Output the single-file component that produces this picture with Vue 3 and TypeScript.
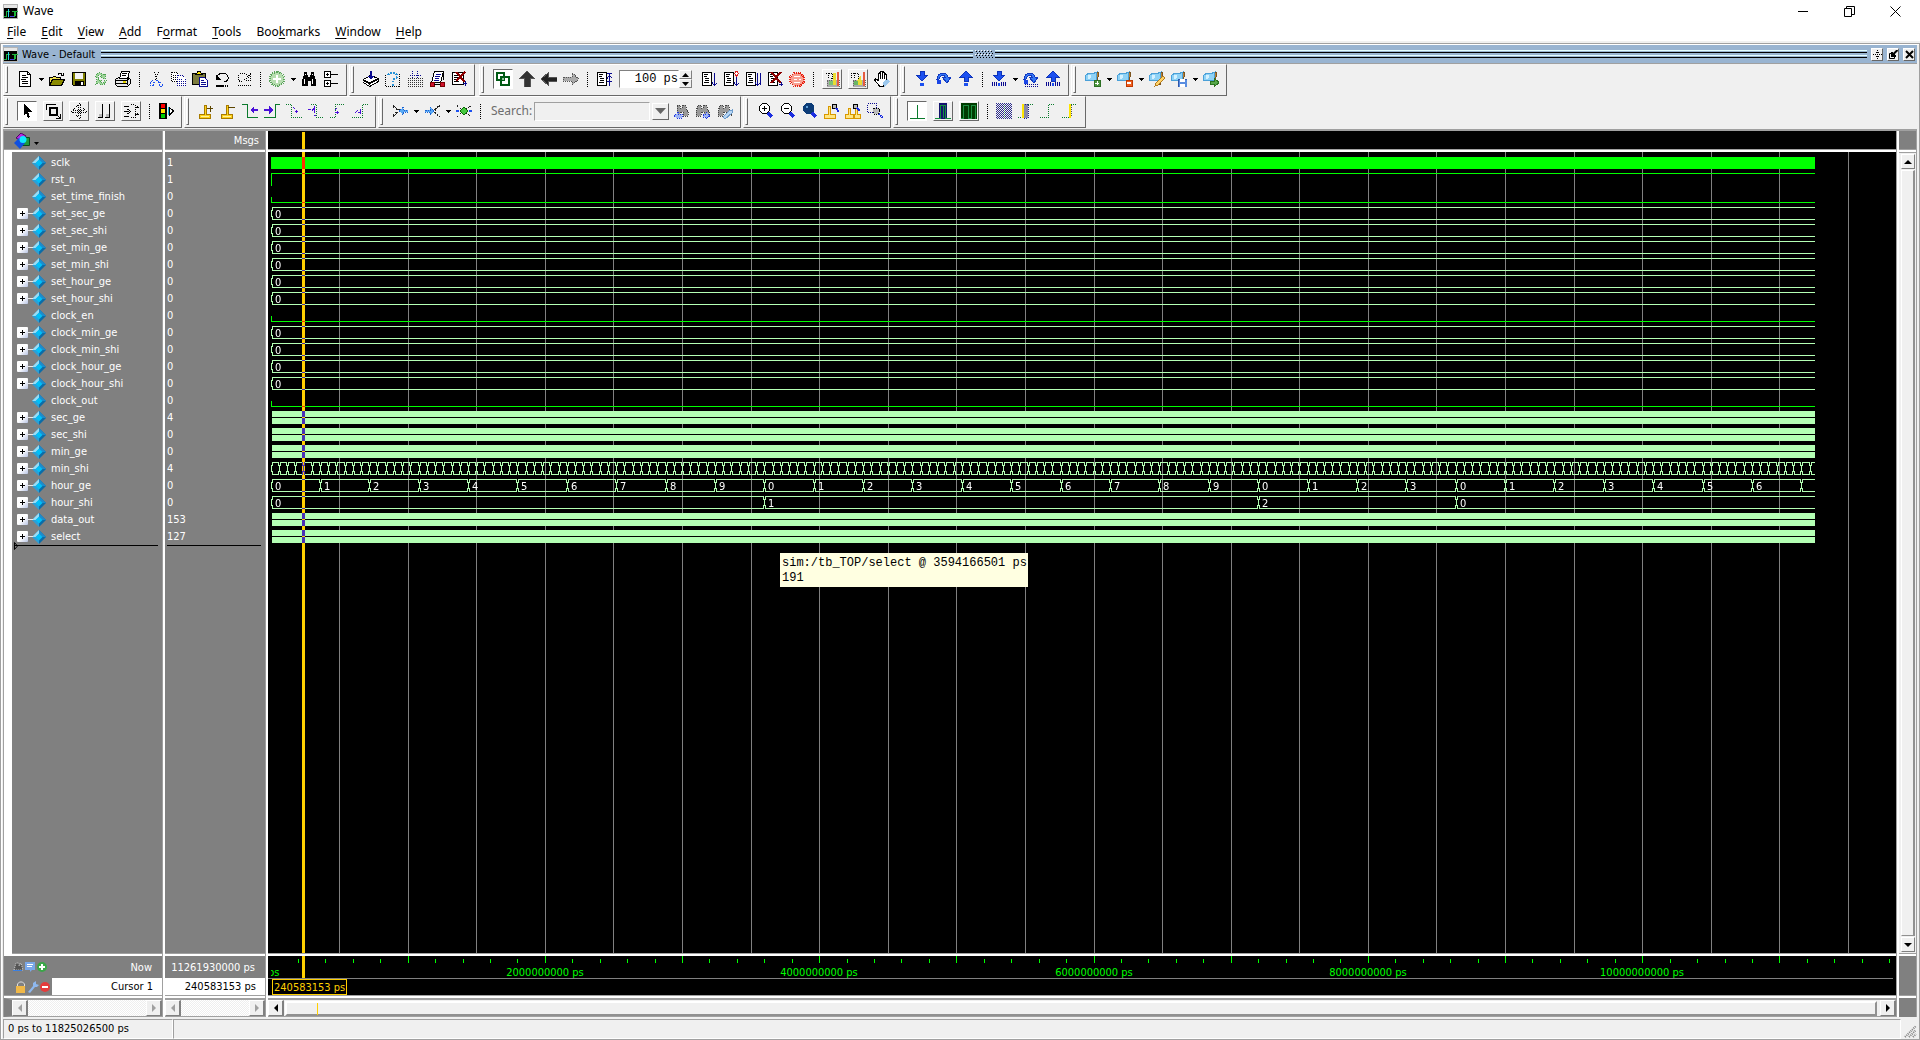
<script setup lang="ts">
import { ref } from 'vue'

/* path data, fill, stroke, dash pattern, stroke width */
type Shape = [string, string?, string?, string?, number?]

interface Tool {
  kind: 'icon' | 'arrow' | 'sep' | 'box' | 'pressed' | 'time' | 'search'
  icon?: string
  label?: string
}

const K = '#000'
const N = 'none'
const NAVY = '#0a0a90'
const BLUE = '#1c50f0'
const GREEN = '#0a7a2c'
const VIOLET = '#4a10d8'

const logo: Shape[] = [
  ['M0 0h15v15H0z', '#b4b4b4'],
  ['M1 1h13v3H1z', '#e6e6e6'],
  ['M1 4h13v10H1z', K],
  ['M1 12.5h2v-5h4M9 7.5h2v5M12.5 12v-5h2', N, '#1eb43c'],
  ['M5.5 5v8', N, '#2ad2e6'],
  ['M7 12.5h4', N, '#4a3ce0'],
]
const doc: Shape[] = [
  ['M1.5 1.5H10.5V14.5H1.5Z', '#fff', K],
  ['M3 3.5h4M3 5.5h3M4 7.5h4M4 9.5h4M3 11.5h5', N, K],
]
const flag: Shape[] = [
  ['M12 1l2 1-3 12-1-1z', '#b88036', '#7d5520'],
  ['M1 4l3-2 3 1 5-2-1 8-4 1-3-1-4 1z', '#8ed2f6', '#4aa0d8'],
  ['M3 4l3 0 0 3-3 1z', '#d4f1ff'],
]
const arrowDown = 'M6 0h4v4h4l-6 6-6-6h4z'
const bars = 'M1.5 11v4M3.5 11v4M5.5 11v4M10.5 11v4M12.5 11v4M14.5 11v4'
const arc: Shape[] = [
  ['M1 8C2 1 10 0 12 6h3l-4 6-5-6h3C8 3 4 4 3 8z', '#3578f4', '#1238c0'],
  ['M1 9h4v4H1z', '#1a45e6'],
]

const icons: Record<string, Shape[]> = {
  new: [
    ['M2.5 .5h8l3 3v12h-11z', '#fff', K],
    ['M10.5 .5v3h3M5 4.5h4M5 6.5h6M4 8.5h5M5 10.5h6M5 12.5h6', N, K],
  ],
  open: [
    ['M.5 14.5v-8h3l1-1h2l1 1h4v2', '#f2e250', K],
    ['M.5 14.5l3-6h12l-3 6z', '#8a8a00', K],
    ['M9 3.5c1-2 3-2 4 0M14.5 2v3M11.5 4.5h3', N, K],
  ],
  save: [
    ['M1.5 1.5h13v13h-12l-1-1z', '#808000', K],
    ['M4 2h8v6H4z', '#f4f4f4'],
    ['M4 10h9v5H4z', K],
    ['M10 11h2v3h-2z', '#fff'],
  ],
  reload: [
    ['M2 6C4 1 9 1 11 4l2-1-1 5-5-2 2-1C7 3 5 4 5 7z', '#9ed49a', '#4fa352', '1 1'],
    ['M14 9c-2 6-7 6-9 3l-2 1 1-5 5 2-2 1c2 2 4 1 4-1z', '#9ed49a', '#4fa352', '1 1'],
  ],
  print: [
    ['M.5 8.5l3-2h10l2 2v4l-3 3h-10l-2-2z', '#e8e8e8', K],
    ['M4.5 7.5l2-7h8l-2 7z', '#fff', K],
    ['M7 2.500h5M7 4.500h4', N, K],
    ['M1 9.500h11v4M12 9l3-2M1 12.500h11', N, K],
    ['M8 10h3v2H8z', '#e2d000'],
  ],
  cut: [
    ['M6.5 1l2 7M10.5 1l-3 8', N, K, '1 1'],
    ['M5 9.5l-3 2v3h3l1-3 3-2 2 2v4h3v-3l-3-2-2-1', N, BLUE, '2 1'],
  ],
  copy: [
    ['M1.5 1.5h5l2 2v7h-7zM3 4.5h4M3 6.5h4M3 8.5h4', '#fff', K, '1 1'],
    ['M7.5 4.5h5l3 3v7h-8zM9 8.5h4M9 10.5h5M9 12.5h5', '#fff', NAVY, '1 1'],
  ],
  paste: [
    ['M.5 2.5h13v11H.5z', '#7b7b3d', K],
    ['M4 3.5l2-3h2l2 3z', '#ffe600', K],
    ['M7.5 6.5h5l3 3v6h-8z', '#fff', NAVY],
    ['M9 9.5h3M9 11.5h5M9 13.5h5', N, NAVY],
  ],
  undo: [
    ['M3 6.5C4 1 13 1 14 6c1 3-2 5-4 5', N, K],
    ['M1.5 3v6h6z', K],
    ['M2 14h8v2H2zM11 14h1v2h-1zM13 14h1v2h-1z', K],
  ],
  redo: [
    ['M13 6.5C12 1 3 1 2 6c0 3 2 5 4 5', N, K, '1 1'],
    ['M14.5 3v6h-6z', N, K, '1 1'],
    ['M2 14.5h13', N, K, '1 1'],
  ],
  plus: [
    ['M8 1a7 7 0 1 0 .1 0z', '#b7ddb0', '#5ca45c', '1 1', 2],
    ['M7 4h2v3h3v2H9v3H7V9H4V7h3z', '#fff'],
  ],
  find: [
    ['M3 1h3v3h1v2h2V4h1V1h3v3l2 5v6h-5v-5H7v5H1V9l2-5z', K],
    ['M3 8h1v5H3zM11 8h1v5h-1zM4 3h1v1H4zM11 3h1v1h-1z', '#fff'],
  ],
  expand: [
    ['M1.5 .5h6v6h-6zM1.5 9.5h6v6h-6zM8 3.5h7M8 12.5h7M3 3.5h3M4.5 2v3M3 12.5h3M4.5 11v3', '#fff', K],
  ],
  compile: [
    ['M.5 11.5l6 4 9-5v-2l-6-2zM.5 9l6 4 9-5', '#fff', K],
    ['M.5 8.5l7-4 8 3-9 4.5z', '#fff', K],
    ['M7 0h2v5h2l-3 4-3-4h2z', NAVY],
  ],
  help: [
    ['M.5 3.5v12h14v-13', N, K, '1 1'],
    ['M3 4c2-4 9-3 9 1 0 3-4 2-4 6', N, '#2692d8', '2 1', 2],
    ['M7 13h2v2H7z', '#2692d8'],
  ],
  grid: [
    ['M.5 7.5h15M.5 9.5h15M.5 11.5h15M.5 13.5h15M.5 15.5h15', N, '#333', '1 1'],
    ['M5.5 0v7M10.5 0v7M3 4.5h5M8.5 4.5h5', N, NAVY, '1 1'],
  ],
  car: [
    ['M5.5 .5h9l-3 11h-9z', '#fff', K],
    ['M7 3.5h5M6 5.5h5M6 7.5h4M5 9.5h5', N, NAVY],
    ['M1 11h4v4H1zM11 11h4v4h-4z', '#d0102c', '#700'],
    ['M5 13.5h6M14.5 1v8', N, K],
  ],
  stopdoc: [
    ['M1.5 1.5h11v12h-11z', '#fff', K],
    ['M3 4.5h5M3 6.5h4M3 8.5h5M3 10.5h5', N, K],
    ['M5 1l9 10M14 1L5 10', N, '#8b0000', '', 2],
    ['M14.5 10v5M12 12.5h4', N, NAVY],
  ],
  squares: [
    ['M2 2h7v7H2zM6 6h8v8H6z', N, '#005a14', '', 2],
    ['M7 7h2v2H7z', '#8fc59a'],
  ],
  up: [['M8 0l7 7h-4v9H5V7H1z', '#333', '#555']],
  left: [['M0 8l7-6v4h9v4H7v4z', '#222', '#555']],
  right: [['M16 8L9 2v4H0v4h9v4z', '#aaa', '#555', '1 1']],
  docup: [...doc, ['M11 2.5h5M13.5 3v12M11 7.5l2.5-3 3 3M11 10.5h5', N, NAVY]],
  docdown: [...doc, ['M13.5 2v12M11 11.5l2.5 3 3-3', N, NAVY]],
  docstep: [
    ...doc,
    ['M13.5 5v9M11 11.5l2.5 3 3-3', N, NAVY],
    ['M13.5 0l2 2.5-2 2.5-2-2.5z', '#fff', '#e02020'],
  ],
  docrun: [...doc, ['M12.5 2v12M15.5 2v12M10 11.5l2.5 3 3-3 2 3', N, NAVY]],
  docx: [
    ...doc,
    ['M4 1l10 11M14 1L4 12', N, '#8b0000', '', 2],
    ['M14.5 11v4M12 13.5h4', N, NAVY],
  ],
  stop: [
    ['M5 2h6l4 4v5l-4 4H5l-4-4V6z', '#f8a092', '#e82010', '1 1', 2],
    ['M5 5.5h6M5 8.5h3M10 8.5h2M5 11.5h6', N, '#fff'],
  ],
  mem1: [
    ['M1.5 2.5h3v5M4.5 2.5h4v5h-3', N, K, '1 1'],
    ['M3 9h12v7H3z', '#aaa', '#666', '1 1'],
    ['M9 2h3v12H9z', '#e9dc32'],
    ['M13 1h2v14h-2z', '#e65b40'],
    ['M5 10h4v4H5z', '#7cc075'],
  ],
  mem2: [
    ['M1.5 7v-5h3v5M4.5 2.5h4v5', N, K, '1 1'],
    ['M3 9h12v7H3z', '#aaa', '#666', '1 1'],
    ['M7 10l4-6 1 10H7z', '#e9dc32'],
    ['M13 1h2v14h-2z', '#e65b40'],
    ['M4 10h4v4H4z', '#6ab565'],
  ],
  hand: [
    ['M4.5 9.5V3l1-1 1 1V1l1-1 1 1v2l1-2 1 1v3l1-2 1 1v7l-3 4h-4l-5-6 1-1z', '#fff', K],
    ['M9 11l5-3 2 3-6 5z', '#9cc8ee'],
    ['M6.5 3v5M8.5 3v5M10.5 4v4', N, K],
  ],
  stepin: [[arrowDown, BLUE, '#0e34ba'], ['M6 12h4v3H6z', BLUE]],
  stepover: arc,
  stepout: [['M8 0l6 6h-4v4H6V6H2z', BLUE, '#0e34ba'], ['M6 12h4v3H6z', BLUE]],
  stepin2: [[arrowDown, BLUE, '#0e34ba'], ['M7 12h2v3H7z', BLUE], [bars, N, NAVY]],
  stepover2: [...arc, ['M1.5 15.5h14M2 13.5h13', N, NAVY, '1 1']],
  stepout2: [['M8 0l6 6h-4v4H6V6H2z', BLUE, '#0e34ba'], ['M7 12h2v3H7z', BLUE], [bars, N, NAVY]],
  flagadd: [...flag, ['M9 9h6v6H9z', '#4f9840', '#2d7024'], ['M10 12h4M12 10v4', N, '#fff']],
  flagdel: [...flag, ['M9 9h6v6H9z', '#f06020', '#c03800'], ['M10 12h4', N, '#fff', '', 2]],
  flagedit: [...flag, ['M6 15l1-3 7-7 2 2-7 7z', '#ffd36a', '#b47b1c']],
  flagsave: [
    ...flag,
    ['M7 8h9v8H7z', '#5a8de0', '#2e56a8'],
    ['M9 8h5v3H9zM9 13h5v3H9z', '#fff'],
  ],
  flaggo: [...flag, ['M7 10h4V7l5 4.5-5 4.5v-3H7z', '#57a84a', '#2c7421']],
  pointer: [['M5 1l8 8H9l2 5-2 1-2-5-2 3z', K]],
  zoombox: [
    ['M1.5 7V1.5h9', N, K],
    ['M5 5h7v7H5z', N, K, '', 2],
    ['M11 11l4 4M15.5 11v5M11 15.5h5', N, K],
  ],
  move: [
    ['M7.5 2v12M9.5 2v12M2 7.5h12M2 9.5h12', N, K, '1 1'],
    ['M5 4l3.5-3.5L12 4M5 12l3.5 3.5L12 12M4 5L.5 8.5 4 12M12 5l3.5 3.5L12 12', N, K, '1 1'],
  ],
  twobars: [['M5.5 1v13M12.5 1v13M1 14.5h5M8 14.5h5', N, K], ['M2 11h3v3H2zM9 11h3v3H9z', '#bbb']],
  edit: [
    ['M1 3.5h5M1 8.5h5M1 13.5h5M4.5 6l3 2.5-3 2.5', N, K],
    ['M8 1.5h4v13h-4', N, K, '1 1'],
    ['M12 4.5h4M12 11.5h4M14.5 3v3M14.5 10v3', N, K, '2 1'],
  ],
  traffic: [
    ['M1 0h8v16H1z', K],
    ['M3 1h4v4H3z', '#f00'],
    ['M3 6h4v4H3z', '#ffe100'],
    ['M3 11h4v4H3z', '#0c0'],
    ['M11.5 4.5l4 3.5-4 4z', '#fff', K],
    ['M10.5 4v8', N, '#19b4d8'],
  ],
  curadd: [
    ['M6 2h2v9h4v4H1v-4h5z', '#ffd21a', '#a87b00'],
    ['M3 13h8', N, '#fff3a0'],
    ['M9 5.5h6M12.5 3v6', N, '#5c4500'],
  ],
  curdel: [
    ['M6 2h2v9h4v4H1v-4h5z', '#ffd21a', '#a87b00'],
    ['M3 13h8', N, '#fff3a0'],
    ['M8 4.5h7', N, '#5c4500'],
  ],
  prevedge: [['M0 1.5h5.5V14.5H16', N, GREEN], ['M8 7l4-4v3h4v2h-4v3z', VIOLET]],
  nextedge: [['M0 14.5h11.5V1.5H16', N, GREEN], ['M9 7L5 3v3H0v2h5v3z', VIOLET]],
  edge1: [['M0 1.5h5.5V14.5H16', N, GREEN, '1 1'], ['M7 4l2 2M9 8h3M10 7l1 3', N, VIOLET]],
  edge2: [['M3 1.5h5.5V14.5H16', N, GREEN, '1 1'], ['M0 6.5h3M4 8l2-3v5M6 12h2', N, VIOLET]],
  edge3: [['M0 14.5h5.5V1.5H14', N, GREEN, '1 1'], ['M5 7l2-2M5 9h4M7 8v3', N, VIOLET]],
  edge4: [['M0 14.5h10.5V1.5H16', N, GREEN, '1 1'], ['M3 10l3-3M6 9h3M8 6v5', N, VIOLET]],
  merge1: [
    ['M1 2.5l5 4h3M1 13.5l5-4M1 4l4 3M1 12l4-3', N, '#222', '2 1'],
    ['M7 8l4-4v3h5v2h-5v3z', '#58a8f4', '#1d62d0', '1 1'],
  ],
  merge2: [
    ['M16 2.5l-5 4v3l5 4M14 3l-4 4M14 13l-4-4', N, '#222', '2 1'],
    ['M10 8L6 4v3H1v2h5v3z', '#58a8f4', '#1d62d0', '1 1'],
  ],
  merge3: [
    ['M1 2.5l4 3h6l4-3M1 13.5l4-3h6l4 3', N, '#222', '1 1'],
    ['M8 4l4 4-4 4-4-4z', '#46c840', '#086b00'],
    ['M0 8h3M13 8h3', N, BLUE, '', 2],
  ],
  findprev: [
    ['M4 2h3v3h2V2h3l3 7v4h-5V9H7v4H4z', '#999', '#444', '1 1'],
    ['M1 13l4-4v2h4v4H5l-1 1z', '#9db4f4', '#2034e0', '1 1'],
  ],
  findnext: [
    ['M3 2h3v3h2V2h3l3 7v3H9V9H6v4H1V9z', '#999', '#444', '1 1'],
    ['M15 13l-4-4v2H8v3h3v2z', '#9db4f4', '#2034e0', '1 1'],
  ],
  findopt: [
    ['M3 2h3v3h2V2h3l3 7v3H9V9H6v4H1V9z', '#999', '#444', '1 1'],
    ['M6 14l6-6 3-1v3l-7 6z', '#b8d6f4', '#6c9ccc'],
  ],
  zoomin: [
    ['M5.5 .5h4l3 3v4l-3 3h-4l-3-3v-4z', '#fff', K],
    ['M5 5.5h5M7.5 3v5', N, K],
    ['M11 10l4 4', N, '#1c2ee0', '', 3],
  ],
  zoomout: [
    ['M5.5 .5h4l3 3v4l-3 3h-4l-3-3v-4z', '#fff', K],
    ['M5 5.5h5', N, K],
    ['M11 10l4 4', N, '#1c2ee0', '', 3],
  ],
  zoomfull: [
    ['M5 0h5l3 3v5l-3 3H5L2 8V3z', '#0c3c78'],
    ['M5 3h2v2H5z', '#5fa0d8'],
    ['M11 10l4 4', N, '#1c2ee0', '', 3],
  ],
  zoomcur: [
    ['M5 3h2v8h5v4H1v-4h4z', '#ffe680', '#d89800'],
    ['M9 1h4v4H9z', '#bbb', K],
    ['M13 5l3 4', N, '#1c2ee0', '', 2],
  ],
  zoomcur2: [
    ['M3 5h2v6h3v4H0v-4h3zM10 5h2v6h3v4H9v-4h1z', '#ffe680', '#d89800'],
    ['M8 1h4v4H8z', '#bbb', K],
    ['M12 5l3 3', N, '#1c2ee0', '', 2],
  ],
  zoomsel: [
    ['M.5 .5h9v9h-9z', N, NAVY, '1 1'],
    ['M7 5h4l2 3-2 3H7L6 8z', '#bbb', K, '1 1'],
    ['M12 11l4 4', N, '#1c2ee0', '1 1', 2],
  ],
  w1: [['M1 15.5h15M8.5 2v13', N, GREEN]],
  w2: [['M4 0h8v16H4z', '#14146e'], ['M0 15.5h5.5V2.5h5v13H16M8.5 3v12', N, '#149040']],
  w3: [['M0 0h16v16H0z', '#003c00'], ['M0 15.5h2.5V2.5h5v13h3v-13h4v13', N, '#1c9040']],
  w4: [
    ['M0 .5h16M1 1.5h15M0 2.5h16M1 3.5h15M0 4.5h16M1 5.5h15M0 6.5h16M1 7.5h15M0 8.5h16M1 9.5h15M0 10.5h16M1 11.5h15M0 12.5h16M1 13.5h15M0 14.5h16M1 15.5h15', N, '#2a2a8a', '1 1'],
    ['M8.5 2v13', N, '#3a9060', '1 1'],
  ],
  w5: [
    ['M5 1h5v14H5z', '#8888a8', '#222288', '1 1'],
    ['M5 1v14', N, '#ffe600', '', 2],
    ['M0 14.5h4M10 1.5h5', N, GREEN, '1 1'],
  ],
  w6: [['M0 14.5h8.5V1.5H15', N, GREEN, '1 1']],
  w7: [
    ['M0 14.5h7M9 1.5h6', N, GREEN, '1 1'],
    ['M8 1v14', N, '#ffe600', '', 2],
    ['M9.5 2v12', N, '#555', '1 1'],
  ],
}

const t = (icon: string, label: string): Tool => ({ kind: 'icon', icon, label })
const box = (icon: string, label: string): Tool => ({ kind: 'box', icon, label })
const pressed = (icon: string, label: string): Tool => ({ kind: 'pressed', icon, label })
const drop: Tool = { kind: 'arrow', label: 'More' }
const sep: Tool = { kind: 'sep' }

const rows: Tool[][][] = [
  [
    [
      t('new', 'New'), drop, t('open', 'Open'), t('save', 'Save'), t('reload', 'Reload'), t('print', 'Print'), sep,
      t('cut', 'Cut'), t('copy', 'Copy'), t('paste', 'Paste'), t('undo', 'Undo'), t('redo', 'Redo'), sep,
      t('plus', 'Add'), drop, t('find', 'Find'), t('expand', 'Collapse all'),
    ],
    [t('compile', 'Compile'), t('help', 'Compile out of date'), t('grid', 'Compile all'), t('car', 'Simulate'), t('stopdoc', 'Break')],
    [
      pressed('squares', 'Environment'), t('up', 'Up'), t('left', 'Back'), t('right', 'Forward'), sep,
      t('docup', 'Restart'), { kind: 'time' }, t('docdown', 'Run'), t('docstep', 'Continue run'),
      t('docrun', 'Run all'), t('docx', 'Break'), t('stop', 'Stop'), sep,
      box('mem1', 'Performance profiling'), box('mem2', 'Memory profiling'), t('hand', 'Edit breakpoints'),
    ],
    [
      t('stepin', 'Step into'), t('stepover', 'Step over'), t('stepout', 'Step out'), sep,
      t('stepin2', 'Step into current'), drop, t('stepover2', 'Step over current'), t('stepout2', 'Step out current'),
    ],
    [
      t('flagadd', 'Add bookmark'), drop, t('flagdel', 'Delete bookmark'), drop, t('flagedit', 'Manage bookmarks'),
      t('flagsave', 'Save bookmarks'), drop, t('flaggo', 'Jump to bookmark'),
    ],
  ],
  [
    [
      pressed('pointer', 'Select mode'), box('zoombox', 'Zoom mode'), box('move', 'Pan mode'),
      box('twobars', 'Two cursor mode'), box('edit', 'Edit mode'), sep, t('traffic', 'Stop drawing'),
    ],
    [
      t('curadd', 'Insert cursor'), t('curdel', 'Delete cursor'), t('prevedge', 'Previous transition'),
      t('nextedge', 'Next transition'), t('edge1', 'Previous falling edge'), t('edge2', 'Next falling edge'),
      t('edge3', 'Previous rising edge'), t('edge4', 'Next rising edge'),
    ],
    [
      t('merge1', 'Expand time at cursor'), drop, t('merge2', 'Collapse time at cursor'), drop, t('merge3', 'Expanded time mode'),
      sep, { kind: 'search' }, t('findprev', 'Find previous'), t('findnext', 'Find next'), t('findopt', 'Search options'),
    ],
    [
      t('zoomin', 'Zoom in'), t('zoomout', 'Zoom out'), t('zoomfull', 'Zoom full'), t('zoomcur', 'Zoom on cursor'),
      t('zoomcur2', 'Zoom between cursors'), t('zoomsel', 'Zoom other window'),
    ],
    [
      pressed('w1', 'Thin bars'), box('w2', 'Medium bars'), box('w3', 'Full bars'), sep,
      t('w4', 'Contour'), t('w5', 'Left edge'), t('w6', 'Edge'), t('w7', 'Right edge'),
    ],
  ],
]

const menus: [string, string, string][] = [
  ['', 'F', 'ile'], ['', 'E', 'dit'], ['', 'V', 'iew'], ['', 'A', 'dd'], ['F', 'o', 'rmat'],
  ['', 'T', 'ools'], ['Boo', 'k', 'marks'], ['', 'W', 'indow'], ['', 'H', 'elp'],
]

type Kind = 'clock' | 'high' | 'low' | 'bus' | 'dense'
interface Signal {
  name: string
  value: string
  kind: Kind
  /* [start time in units of 1e9 ps, label] */
  spans?: [number, string][]
}

const END = 11.26193
const flat: [number, string][] = [[0, '0']]
const minutes: [number, string][] = []
for (let k = 0; k * 0.06 < END; k++) minutes.push([k * 0.06, ''])
const hours: [number, string][] = []
for (let h = 0; h < 32; h++) hours.push([h * 0.36, h === 31 ? '' : String((h % 24) % 10)])

const signals: Signal[] = [
  { name: 'sclk', value: '1', kind: 'clock' },
  { name: 'rst_n', value: '1', kind: 'high' },
  { name: 'set_time_finish', value: '0', kind: 'low' },
  { name: 'set_sec_ge', value: '0', kind: 'bus', spans: flat },
  { name: 'set_sec_shi', value: '0', kind: 'bus', spans: flat },
  { name: 'set_min_ge', value: '0', kind: 'bus', spans: flat },
  { name: 'set_min_shi', value: '0', kind: 'bus', spans: flat },
  { name: 'set_hour_ge', value: '0', kind: 'bus', spans: flat },
  { name: 'set_hour_shi', value: '0', kind: 'bus', spans: flat },
  { name: 'clock_en', value: '0', kind: 'low' },
  { name: 'clock_min_ge', value: '0', kind: 'bus', spans: flat },
  { name: 'clock_min_shi', value: '0', kind: 'bus', spans: flat },
  { name: 'clock_hour_ge', value: '0', kind: 'bus', spans: flat },
  { name: 'clock_hour_shi', value: '0', kind: 'bus', spans: flat },
  { name: 'clock_out', value: '0', kind: 'low' },
  { name: 'sec_ge', value: '4', kind: 'dense' },
  { name: 'sec_shi', value: '0', kind: 'dense' },
  { name: 'min_ge', value: '0', kind: 'dense' },
  { name: 'min_shi', value: '4', kind: 'bus', spans: minutes },
  { name: 'hour_ge', value: '0', kind: 'bus', spans: hours },
  { name: 'hour_shi', value: '0', kind: 'bus', spans: [[0, '0'], [3.6, '1'], [7.2, '2'], [8.64, '0']] },
  { name: 'data_out', value: '153', kind: 'dense' },
  { name: 'select', value: '127', kind: 'dense' },
]

const LEFT = 3
const SCALE = 137.17
const px = (time: number): number => LEFT + Math.floor(time * SCALE)
const right = px(END)
const rowTop = (i: number): number => 3 + i * 17 + 1

const lowHigh = (s: Signal, i: number): string => {
  const y = rowTop(i) + 0.5
  return s.kind === 'high'
    ? `M${LEFT + 0.5} ${y + 12}V${y}H${right}`
    : `M${LEFT + 0.5} ${y + 6}V${y + 12}H${right}`
}

const busPath = (s: Signal, i: number): string => {
  const y = rowTop(i)
  const spans = s.spans ?? []
  return spans
    .map(([start], k) => {
      const a = px(start) + 0.5
      const last = k === spans.length - 1
      const b = last ? right : px(spans[k + 1][0]) + 0.5
      const open = `M${a + 1} ${y}v4M${a} ${y + 3}v7M${a + 1} ${y + 9}v4`
      const close = last ? '' : `M${b - 1} ${y}v4M${b - 1} ${y + 9}v4`
      const e = last ? b : b - 1
      return `${open}${close}M${a + 1} ${y + 0.5}H${e}M${a + 1} ${y + 12.5}H${e}`
    })
    .join('')
}

const gridLines = Array.from({ length: 23 }, (_, k) => px((k + 1) * 0.5) + 0.5)
const ticks = Array.from({ length: 59 }, (_, k) => ({ x: px((k + 1) * 0.2) + 0.5, top: (k + 1) % 5 ? 3 : 0 }))
const timeLabels = [2, 4, 6, 8, 10].map((n) => ({ x: px(n), text: `${n}000000000 ps` }))
const cursorX = px(0.240583153) - 2

const runLength = ref('100 ps')
const query = ref('')
</script>

<template>
  <div class="app">
    <header class="titlebar">
      <svg width="15" height="15" shape-rendering="crispEdges">
        <path v-for="(p, n) in logo" :key="n" :d="p[0]" :fill="p[1]" :stroke="p[2] || 'none'" />
      </svg>
      <span class="title">Wave</span>
      <div class="winbtns">
        <button aria-label="Minimize"><svg width="11" height="11"><path d="M0 5.5h10" stroke="#000" /></svg></button>
        <button aria-label="Restore">
          <svg width="11" height="11"><path d="M.5 2.5h7v8h-7zM2.5 2V.5h8v8H8" fill="none" stroke="#000" /></svg>
        </button>
        <button aria-label="Close"><svg width="11" height="11"><path d="M.5 .5l10 10M10.5 .5l-10 10" stroke="#000" /></svg></button>
      </div>
    </header>

    <nav class="menubar">
      <button v-for="m in menus" :key="m.join('')">{{ m[0] }}<u>{{ m[1] }}</u>{{ m[2] }}</button>
    </nav>

    <section class="frame">
      <div class="panetitle">
        <svg width="15" height="15" shape-rendering="crispEdges">
          <path v-for="(p, n) in logo" :key="n" :d="p[0]" :fill="p[1]" :stroke="p[2] || 'none'" />
        </svg>
        <span class="panename">Wave - Default</span>
        <div class="stripes"><i /><i /></div>
        <svg class="grip" width="18" height="8" shape-rendering="crispEdges">
          <path d="M0 .5h18M0 4.5h18" stroke="#fff" stroke-dasharray="1 2" />
          <path d="M1 1.5h17M1 5.5h17M2 3.5h16M2 7.5h16" stroke="#000" stroke-dasharray="1 2" />
        </svg>
        <div class="stripes"><i /><i /></div>
        <div class="panebtns">
          <button aria-label="Undock">
            <svg width="9" height="9"><path d="M4.500 0v9M0 4.500h9M3 2.500h3M3 6.500h3" stroke="#000" stroke-dasharray="1 1" /></svg>
          </button>
          <button aria-label="Dock">
            <svg width="9" height="9"><path d="M.5 3.5h5v5h-5z" fill="none" stroke="#000" /><path d="M8.5 0L3 5.5M3 2v4h4" fill="none" stroke="#000" stroke-width="2" /></svg>
          </button>
          <button aria-label="Close pane">
            <svg width="9" height="9"><path d="M1 1l7 7M8 1L1 8" stroke="#000" stroke-width="2" /></svg>
          </button>
        </div>
      </div>

      <div v-for="(row, r) in rows" :key="r" class="toolrow">
        <div v-for="(bar, b) in row" :key="b" class="toolbar" :class="{ run: bar.some((x) => x.kind === 'time') }">
          <i class="handle" />
          <template v-for="(tool, k) in bar" :key="k">
            <i v-if="tool.kind === 'sep'" class="sep" />
            <button v-else-if="tool.kind === 'arrow'" class="arrow" :aria-label="tool.label">
              <svg width="5" height="3" shape-rendering="crispEdges"><path d="M0 0h5L2.5 3z" /></svg>
            </button>
            <div v-else-if="tool.kind === 'time'" class="time">
              <input v-model="runLength" aria-label="Run length" />
              <div class="spin">
                <button aria-label="Increase"><svg width="7" height="4"><path d="M0 4h7L3.5 0z" /></svg></button>
                <button aria-label="Decrease"><svg width="7" height="4"><path d="M0 0h7L3.5 4z" /></svg></button>
              </div>
            </div>
            <div v-else-if="tool.kind === 'search'" class="search">
              <label for="query">Search:</label>
              <input id="query" v-model="query" />
              <button aria-label="Search history"><svg width="11" height="6"><path d="M0 0h11L5.5 6z" fill="#666" /></svg></button>
            </div>
            <button v-else class="tool" :class="tool.kind" :aria-label="tool.label">
              <svg width="16" height="16" viewBox="0 0 16 16" shape-rendering="crispEdges">
                <path
                  v-for="(p, n) in icons[tool.icon ?? '']"
                  :key="n"
                  :d="p[0]"
                  :fill="p[1] || 'none'"
                  :stroke="p[2] || 'none'"
                  :stroke-dasharray="p[3] || 'none'"
                  :stroke-width="p[4] || 1"
                />
              </svg>
            </button>
          </template>
        </div>
      </div>

      <main class="panes">
        <div class="pane names">
          <div class="head">
            <svg width="26" height="16">
              <path d="M2 5l5-5 5 3-3 6z" fill="#b428e0" stroke="#4a0a60" />
              <path d="M8 4.5h7.5v8H8z" fill="#1e9a3c" stroke="#0a4a1c" />
              <path d="M0 10l5-5 6 5-5 6z" fill="#1050e0" />
              <circle cx="9" cy="6.5" r="3.5" fill="#10e8ff" />
              <path d="M20 9h5l-2.5 3z" fill="#000" />
            </svg>
          </div>
          <div class="body">
            <ul class="list">
              <li v-for="s in signals" :key="s.name">
                <span class="knob">
                  <button v-if="s.spans || s.kind === 'dense'" class="plus" aria-label="Expand" />
                </span>
                <svg width="14" height="14" viewBox="0 0 14 14">
                  <path d="M7 0L0 7l7 7z" fill="#2aa0d8" />
                  <path d="M7 0l7 7-7 7z" fill="#0b6da8" />
                  <path d="M7 0L0 7h4l3-3z" fill="#9adcf4" />
                  <path d="M7 0l7 7h-4L7 4z" fill="#1c8ccc" />
                  <path d="M7 3.5L10.5 7 7 10.5 3.5 7z" fill="#00c0f8" />
                </svg>
                <span>{{ s.name }}</span>
              </li>
            </ul>
            <div class="endline"><svg width="4" height="8"><path d="M.5 .5v7l3-3.5z" fill="none" stroke="#000" /></svg></div>
          </div>
          <div class="foot">
            <div class="now">
              <svg width="36" height="12">
                <path d="M1 9l2-7h3v3l2-3 2 7z" fill="#555" stroke="#ccc" stroke-dasharray="1 1" />
                <path d="M0 9.5h9" stroke="#3c80e0" />
                <path d="M12 1h10v8h-3l-2 2v-2h-5z" fill="#7aa8ea" />
                <path d="M14 3.5h6M14 5.5h5" stroke="#fff" />
                <circle cx="29" cy="6" r="5" fill="#3aa648" />
                <path d="M26 6h6M29 3v6" stroke="#fff" stroke-width="2" />
              </svg>
              <span>Now</span>
            </div>
            <div class="cur">
              <svg width="36" height="12">
                <path d="M2.5 6V3l2-2h3l2 2v3" fill="none" stroke="#ddd" />
                <path d="M1 5h9v7H1z" fill="#f0b848" />
                <path d="M13 11l5-6V2l3-2v3l3 1-2 2h-2l-5 6z" fill="#8eb8ee" />
                <circle cx="30" cy="6" r="5" fill="#e43c3c" />
                <path d="M27 6h6" stroke="#fff" stroke-width="2" />
              </svg>
              <span>Cursor 1</span>
            </div>
          </div>
          <div class="scroll off">
            <button aria-label="Scroll left"><svg width="4" height="8"><path d="M4 0v8L0 4z" /></svg></button>
            <i />
            <button aria-label="Scroll right"><svg width="4" height="8"><path d="M0 0v8l4-4z" /></svg></button>
          </div>
        </div>

        <div class="pane values">
          <div class="head"><span>Msgs</span></div>
          <div class="body">
            <ul class="list">
              <li v-for="s in signals" :key="s.name">{{ s.value }}</li>
            </ul>
            <div class="endline" />
          </div>
          <div class="foot">
            <div class="now"><span>11261930000 ps</span></div>
            <div class="cur"><span>240583153 ps</span></div>
          </div>
          <div class="scroll off">
            <button aria-label="Scroll left"><svg width="4" height="8"><path d="M4 0v8L0 4z" /></svg></button>
            <i />
            <button aria-label="Scroll right"><svg width="4" height="8"><path d="M0 0v8l4-4z" /></svg></button>
          </div>
        </div>

        <div class="pane waves">
          <div class="head">
            <svg class="fill"><rect :x="cursorX" y="1" width="3" height="17" fill="#ffd000" /></svg>
          </div>
          <div class="body">
            <svg class="fill" shape-rendering="crispEdges">
              <line v-for="x in gridLines" :key="x" :x1="x" :x2="x" y1="0" y2="100%" stroke="#808080" />
              <g v-for="(s, i) in signals" :key="s.name">
                <rect v-if="s.kind === 'clock'" :x="LEFT" :y="rowTop(i) + 1" :width="right - LEFT" height="12" fill="#00ff00" />
                <template v-else-if="s.kind === 'dense'">
                  <rect :x="LEFT + 1" :y="rowTop(i)" :width="right - LEFT - 1" height="13" fill="#000" />
                  <rect :x="LEFT + 1" :y="rowTop(i)" :width="right - LEFT - 1" height="6" fill="#b4ffb4" />
                  <rect :x="LEFT + 1" :y="rowTop(i) + 7" :width="right - LEFT - 1" height="6" fill="#b4ffb4" />
                </template>
                <path v-else-if="s.kind === 'bus'" :d="busPath(s, i)" fill="none" stroke="#b4ffb4" />
                <path v-else :d="lowHigh(s, i)" fill="none" stroke="#00ff00" />
                <template v-for="sp in s.spans" :key="sp[0]">
                  <text v-if="sp[1]" :x="px(sp[0]) + 4" :y="rowTop(i) + 11">{{ sp[1] }}</text>
                </template>
              </g>
              <rect class="cursor" :x="cursorX" y="0" width="3" height="100%" fill="#ffd000" />
            </svg>
            <div class="tip">sim:/tb_TOP/select @ 3594166501 ps<br />191</div>
          </div>
          <div class="foot">
            <svg class="fill" shape-rendering="crispEdges">
              <line v-for="k in ticks" :key="k.x" :x1="k.x" :x2="k.x" :y1="k.top" y2="7" stroke="#00ff00" />
              <g class="scale">
                <svg :x="LEFT" width="40" height="24"><text x="-3" y="20">ps</text></svg>
                <text v-for="l in timeLabels" :key="l.x" :x="l.x" y="20">{{ l.text }}</text>
              </g>
              <rect x="0" y="22" width="1625" height="1" fill="#808080" />
              <rect :x="cursorX" y="0" width="3" height="22" fill="#ffd000" />
            </svg>
            <div class="curbox">240583153 ps</div>
          </div>
          <div class="scroll">
            <button aria-label="Scroll left"><svg width="4" height="8"><path d="M4 0v8L0 4z" /></svg></button>
            <b class="thumb"><i class="mark" /></b>
            <button aria-label="Scroll right"><svg width="4" height="8"><path d="M0 0v8l4-4z" /></svg></button>
          </div>
        </div>

        <div class="pane vbar">
          <div class="head" />
          <div class="body">
            <button aria-label="Scroll up"><svg width="8" height="4"><path d="M0 4h8L4 0z" /></svg></button>
            <b class="vthumb" />
            <button aria-label="Scroll down"><svg width="8" height="4"><path d="M0 0h8L4 4z" /></svg></button>
          </div>
          <div class="foot" />
          <div class="scroll" />
        </div>
      </main>

      <footer class="status">
        <span class="range">0 ps to 11825026500 ps</span>
        <span class="rest" />
        <svg width="16" height="19"><path d="M4 18L15 7M8 18l7-7M12 18l3-3" stroke="#808080" stroke-dasharray="1 1" stroke-width="2" /></svg>
      </footer>
    </section>
  </div>
</template>

<style>
html,
body {
  margin: 0;
  background: #fff;
}
</style>

<style scoped>
* {
  box-sizing: border-box;
}
.app {
  display: flex;
  flex-direction: column;
  height: 100vh;
  overflow: hidden;
  font: 11px/17px 'DejaVu Sans Condensed', 'DejaVu Sans', sans-serif;
  color: #000;
}
button {
  border: 0;
  padding: 0;
  margin: 0;
  background: none;
  font: inherit;
  color: inherit;
  display: flex;
  align-items: center;
  justify-content: center;
  flex: none;
}
svg {
  display: block;
  flex: none;
}
.titlebar {
  display: flex;
  height: 22px;
  padding-left: 3px;
  align-items: center;
  font: 12px/22px 'Noto Sans', sans-serif;
}
.title {
  flex: 1;
  padding-left: 5px;
}
.winbtns {
  display: flex;
  padding-right: 2px;
}
.winbtns button {
  width: 46px;
  height: 20px;
}
.menubar {
  display: flex;
  height: 21px;
  padding: 0 7px;
  gap: 15px;
  font: 12px/20px 'Noto Sans', sans-serif;
  border-bottom: 2px solid #f0f0f0;
}
.menubar button {
  display: block;
}
.menubar u {
  text-underline-offset: 2px;
}
.frame {
  flex: 1;
  min-height: 0;
  display: flex;
  flex-direction: column;
  background: #f0f0f0;
  border: 1px solid #a0a0a0;
  box-shadow: inset 1px 1px #fff;
  padding: 1px 2px 0 2px;
}
.panetitle {
  display: flex;
  height: 19px;
  align-items: center;
  background: #99b4d1;
  border-bottom: 1px solid #a0a0a0;
  padding-right: 2px;
}
.panename {
  width: 83px;
  padding-left: 4px;
  white-space: nowrap;
}
.stripes {
  flex: 1;
  display: flex;
  flex-direction: column;
  gap: 2px;
}
.stripes i {
  height: 3px;
  border-top: 1px solid #e4ffff;
  border-bottom: 1px solid #000;
}
.grip {
  margin: 0 2px;
}
.panebtns {
  display: flex;
  gap: 4px;
  padding-left: 4px;
}
.panebtns button {
  width: 12px;
  height: 13px;
  background: #f0f0f0;
  border: 1px solid;
  border-color: #fff #666 #666 #fff;
}
.toolrow {
  display: flex;
  height: 32px;
  gap: 2px;
}
.toolbar {
  display: flex;
  align-items: center;
  height: 32px;
  padding: 0 4px 2px 0;
  border: 1px solid;
  border-color: #fff #696969 #696969 #fff;
}
.toolbar.run {
  margin-left: 2px;
}
.handle {
  width: 3px;
  height: 27px;
  margin: 0 6px 0 1px;
  border: 1px solid;
  border-color: #fff #696969 #696969 #fff;
}
.tool {
  width: 22px;
  height: 20px;
}
.box,
.pressed {
  width: 20px;
  margin: 0 3px;
  border: 1px solid;
  border-color: #fff #696969 #696969 #fff;
}
.pressed {
  background: #fff;
  border-color: #696969 #fff #fff #696969;
}
.arrow {
  width: 10px;
  height: 20px;
}
.sep {
  width: 1px;
  height: 15px;
  margin: 0 5px;
  background: repeating-linear-gradient(#000 0 1px, transparent 1px 2px);
}
.time {
  display: flex;
  align-items: center;
  padding: 0 6px 0 4px;
}
.time input {
  width: 60px;
  height: 18px;
  border: 1px solid;
  border-color: #808080 #fff #fff #808080;
  padding: 0;
  text-align: right;
  background: #fff;
  font: 12px/16px 'Liberation Mono', monospace;
}
.spin {
  display: flex;
  flex-direction: column;
}
.spin button {
  width: 13px;
  height: 9px;
  border: 1px solid;
  border-color: #fff #808080 #808080 #fff;
}
.search {
  display: flex;
  align-items: center;
  padding: 0 1px 0 5px;
  font: 12px/18px 'Noto Sans', sans-serif;
  color: #6d6d6d;
}
.search label {
  width: 43px;
}
.search input {
  width: 116px;
  height: 19px;
  border: 1px solid;
  border-color: #a0a0a0 #fff #fff #a0a0a0;
  background: #f0f0f0;
  padding: 0 2px;
}
.search button {
  width: 17px;
  height: 17px;
  margin-left: 2px;
  border: 1px solid;
  border-color: #fff #696969 #696969 #fff;
}
.panes {
  flex: 1;
  min-height: 0;
  display: flex;
  margin-top: 1px;
  border-top: 2px solid #a0a0a0;
  border-left: 1px solid #a0a0a0;
  background: #fff;
}
.pane {
  display: flex;
  flex-direction: column;
  min-height: 0;
  color: #fff;
  border-right: 1px solid #a0a0a0;
  margin-right: 2px;
}
.names {
  width: 159px;
}
.values {
  width: 101px;
}
.waves {
  flex: 1;
  min-width: 0;
}
.vbar {
  width: 18px;
  margin-right: 0;
}
.head,
.body,
.foot {
  background: #808080;
  border-bottom: 1px solid #a0a0a0;
  margin-bottom: 2px;
}
.head {
  height: 19px;
  display: flex;
}
.names .head {
  padding: 2px 0 0 10px;
}
.values .head {
  justify-content: flex-end;
  padding: 1px 6px 0 0;
}
.body {
  flex: 1;
  min-height: 0;
}
.names .body {
  margin-left: 8px;
}
.foot {
  height: 40px;
}
.waves .head,
.waves .body,
.waves .foot {
  position: relative;
  background: #000;
}
.waves .body {
  isolation: isolate;
  overflow: hidden;
}
.fill {
  width: 100%;
  height: 100%;
}
.list {
  list-style: none;
  margin: 0;
  padding: 2px 0 0;
}
.list li {
  height: 17px;
  display: flex;
  align-items: center;
}
.names li svg {
  margin-right: 5px;
}
.values li {
  padding-left: 2px;
}
.knob {
  width: 20px;
  height: 11px;
  padding-left: 5px;
}
.plus {
  width: 11px;
  height: 11px;
  position: relative;
  border-radius: 1px;
  background:
    linear-gradient(#000, #000) center / 5px 1px no-repeat,
    linear-gradient(#000, #000) center / 1px 5px no-repeat,
    linear-gradient(135deg, #fff 50%, #b8c4e4);
}
.plus::after {
  content: '';
  position: absolute;
  left: 11px;
  top: 5px;
  width: 5px;
  height: 1px;
  background: #e8e8e8;
}
.endline {
  height: 8px;
  margin: -3px 4px 0 2px;
  display: flex;
  background: linear-gradient(#000, #000) 0 3px / 100% 1px no-repeat;
}
.now,
.cur {
  display: flex;
  align-items: center;
  justify-content: space-between;
}
.now {
  height: 22px;
  padding-right: 10px;
}
.names .now svg {
  margin-left: 9px;
}
.cur {
  height: 17px;
  color: #000;
}
.cur span {
  flex: 1;
  height: 17px;
  background: #fff;
  text-align: right;
  padding-right: 9px;
}
.names .cur svg {
  margin: 0 1px 0 11px;
}
.values .now {
  justify-content: flex-end;
}
.scroll {
  height: 19px;
  flex: none;
  display: flex;
  align-items: center;
  background: #f0f0f0;
  border-top: 2px solid #a0a0a0;
  border-bottom: 1px solid #a0a0a0;
}
.names .scroll {
  border-left: 8px solid #808080;
}
.scroll button {
  width: 16px;
  height: 16px;
  background: #f0f0f0;
  border: 1px solid;
  border-color: #fff #808080 #808080 #fff;
  border-right-width: 2px;
}
.off i {
  flex: 1;
  height: 16px;
  background: repeating-conic-gradient(#fff 0 25%, #eee 0 50%) 0 0 / 2px 2px;
}
.off svg {
  fill: #a0a0a0;
}
.thumb {
  flex: 1;
  height: 15px;
  margin: 0 3px 0 1px;
  background: #f0f0f0;
  border: 2px solid;
  border-color: #fff #909090 #909090 #fff;
}
.mark {
  display: block;
  width: 1px;
  height: 12px;
  margin-left: 30px;
  background: #ffd000;
}
.waves text {
  fill: #fff;
}
.waves .scale text {
  fill: #00ff00;
  text-anchor: middle;
}
.waves .scale svg text {
  text-anchor: start;
}
.cursor {
  mix-blend-mode: difference;
}
.tip {
  position: absolute;
  left: 512px;
  top: 401px;
  padding: 3px 1px 1px 2px;
  background: #ffffe1;
  color: #000;
  font: 12px/15px 'Liberation Mono', monospace;
  white-space: nowrap;
}
.curbox {
  position: absolute;
  left: 4px;
  top: 23px;
  height: 16px;
  padding: 0 1px;
  border: 1px solid #ffd000;
  background: #000;
  color: #ffd000;
  line-height: 15px;
}
.vbar .body {
  display: flex;
  flex-direction: column;
  align-items: center;
  gap: 1px;
  padding: 1px 0;
  background: #f0f0f0;
  border-top: 1px solid #a0a0a0;
}
.vbar .body button {
  width: 14px;
  height: 15px;
  border: 1px solid;
  border-color: #fff #808080 #808080 #fff;
}
.vthumb {
  flex: 1;
  width: 14px;
  border: 1px solid;
  border-color: #fff #909090 #909090 #fff;
  border-right-width: 2px;
}
.vbar .scroll {
  background: #808080;
  border: 0;
}
.status {
  display: flex;
  height: 22px;
  padding-top: 2px;
  line-height: 18px;
}
.range,
.rest {
  border: 1px solid;
  border-color: #a0a0a0 #fff #fff #a0a0a0;
}
.range {
  width: 170px;
  padding-left: 4px;
}
.rest {
  flex: 1;
}
</style>
